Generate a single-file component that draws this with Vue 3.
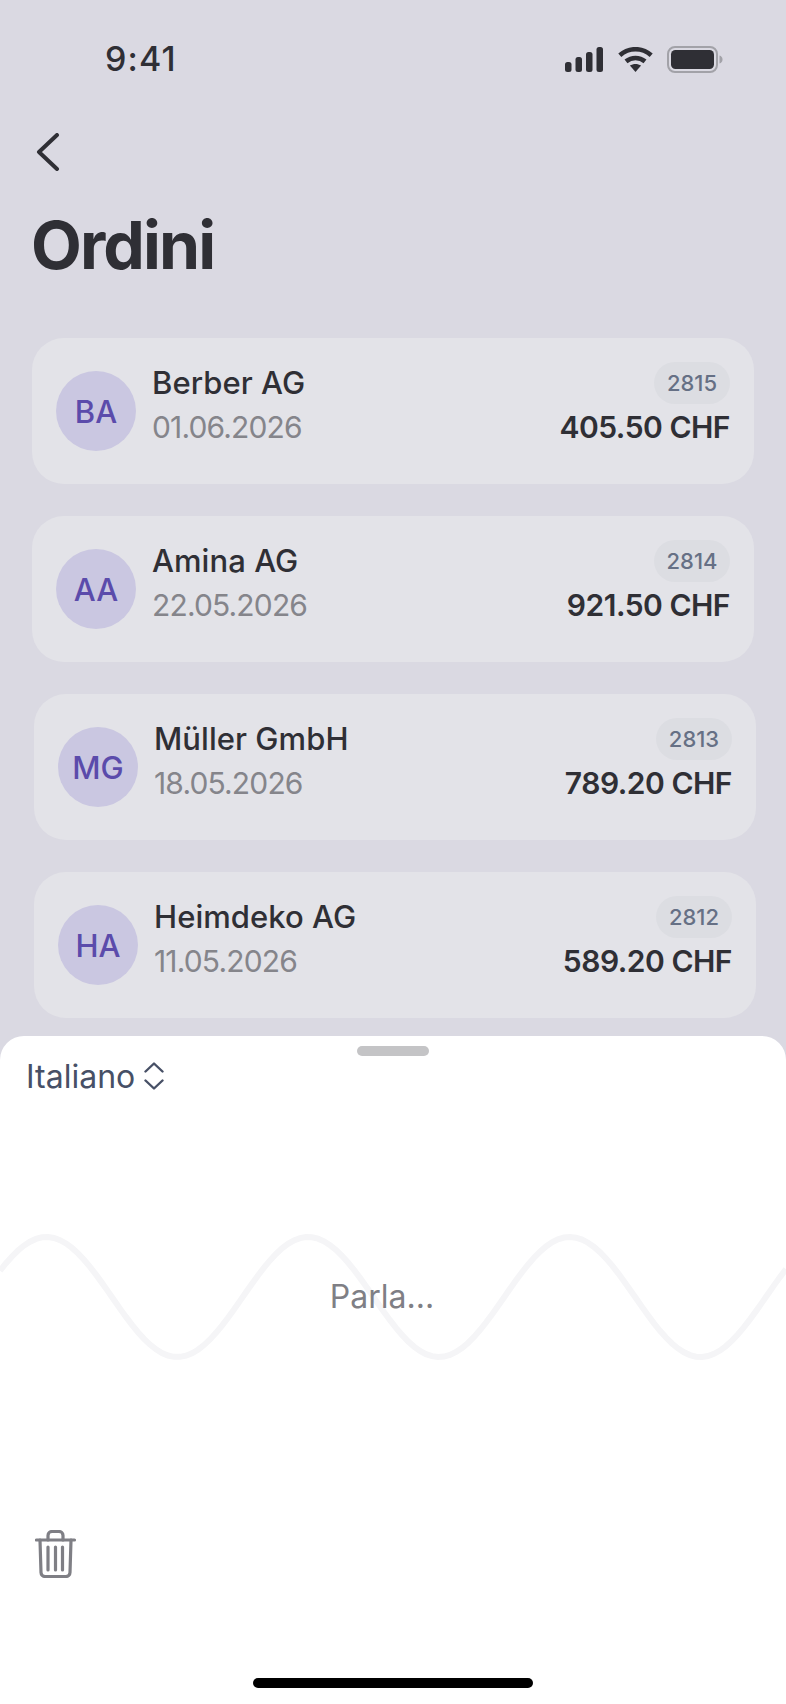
<script setup>
const orders = [
  { initials: 'BA', name: 'Berber AG', date: '01.06.2026', id: '2815', total: '405.50 CHF', shifted: false },
  { initials: 'AA', name: 'Amina AG', date: '22.05.2026', id: '2814', total: '921.50 CHF', shifted: false },
  { initials: 'MG', name: 'Müller GmbH', date: '18.05.2026', id: '2813', total: '789.20 CHF', shifted: true },
  { initials: 'HA', name: 'Heimdeko AG', date: '11.05.2026', id: '2812', total: '589.20 CHF', shifted: true },
]

const points = []
for (let x = 0; x <= 786; x += 6) {
  const y = 68 - 60 * Math.cos((2 * Math.PI * (x - 46.5)) / 261.6)
  points.push(`${x},${y.toFixed(2)}`)
}
const wave = 'M' + points.join(' L')
</script>

<template>
  <div class="screen">
    <header class="status">
      <span class="time">9:41</span>
      <div class="status-icons">
        <svg width="38" height="25" viewBox="0 0 38 25" fill="#2f2f35">
          <rect x="0" y="15" width="6.5" height="10" rx="2.5" />
          <rect x="10.5" y="10" width="6.5" height="15" rx="2.5" />
          <rect x="21" y="5" width="6.5" height="20" rx="2.5" />
          <rect x="31.5" y="0" width="6.5" height="25" rx="2.5" />
        </svg>
        <svg width="35" height="25" viewBox="0 0 35 25" fill="none" stroke="#2f2f35" stroke-width="4.6">
          <path d="M1.8 8.2C11 .2 24 .2 33.2 8.2" />
          <path d="M8 14.4c5.6-4.6 13.4-4.6 19 0" />
          <path d="M17.5 25l-5.6-6.4c3.4-2.2 7.8-2.2 11.2 0z" fill="#2f2f35" stroke="none" />
        </svg>
        <svg class="battery" width="56" height="27" viewBox="0 0 56 27" fill="none">
          <rect x="1" y="1" width="49" height="25" rx="7" stroke="#a2a2a8" stroke-width="2" />
          <rect x="4" y="4" width="43" height="19" rx="4.5" fill="#2f2f35" />
          <path d="M52.500 9.500c1.800.5 3 2 3 4s-1.200 3.500-3 4z" fill="#a2a2a8" />
        </svg>
      </div>
    </header>

    <button class="back" type="button" aria-label="Indietro">
      <svg width="24" height="38" viewBox="0 0 24 38" fill="none" stroke="#2f2f35" stroke-width="4" stroke-linecap="round" stroke-linejoin="round">
        <path d="M21 2 3 19l18 17" />
      </svg>
    </button>

    <h1 class="title">Ordini</h1>

    <ul class="orders">
      <li v-for="o in orders" :key="o.id" class="card" :class="{ shifted: o.shifted }">
        <div class="avatar">{{ o.initials }}</div>
        <div class="info">
          <div class="name">{{ o.name }}</div>
          <div class="date">{{ o.date }}</div>
        </div>
        <div class="meta">
          <span class="badge">{{ o.id }}</span>
          <span class="total">{{ o.total }}</span>
        </div>
      </li>
    </ul>

    <section class="sheet">
      <div class="handle"></div>
      <div class="language">
        <span>Italiano</span>
        <svg width="20" height="28" viewBox="0 0 20 28" fill="none" stroke="#475066" stroke-width="2.4" stroke-linecap="round" stroke-linejoin="round">
          <path d="M1.500 9.500 10 1.500l8.500 8" />
          <path d="M1.500 18.500 10 26.500l8.500-8" />
        </svg>
      </div>

      <div class="voice">
        <svg class="wave" width="786" height="136" viewBox="0 0 786 136" fill="none">
          <path :d="wave" stroke="#f5f5f7" stroke-width="6" />
        </svg>
        <span class="prompt">Parla...</span>
      </div>

      <button class="trash" type="button" aria-label="Elimina">
        <svg width="42" height="48" viewBox="0 0 42 48" fill="none" stroke="#7f7f85" stroke-width="3.2" stroke-linecap="round" stroke-linejoin="round">
          <path d="M1.500 10h38" />
          <path d="M13 10V5.500a4 4 0 0 1 4-4h7a4 4 0 0 1 4 4V10" />
          <path d="M5 10l1 32.500a4 4 0 0 0 4 4h21a4 4 0 0 0 4-4L36 10" />
          <path d="M13 17v23M20.500 17v23M27.500 17v23" />
        </svg>
      </button>

      <div class="home"></div>
    </section>
  </div>
</template>

<style>
html, body { margin: 0; background: #dad9e2; }
</style>

<style scoped>
.screen {
  position: relative;
  width: 786px;
  height: 1704px;
  overflow: hidden;
  background: #dad9e2;
  color: #2f2f35;
  font-family: Inter, "Liberation Sans", sans-serif;
}
.status {
  display: flex;
  align-items: center;
  justify-content: space-between;
  height: 26px;
  padding: 46px 63px 0 105px;
}
.time {
  font-size: 34px;
  line-height: 26px;
  font-weight: 500;
  letter-spacing: 1.1px;
}
.status-icons {
  display: flex;
  align-items: center;
  gap: 15px;
}
.battery { margin-left: -1px; }
.back {
  display: block;
  margin: 61px 0 0 36px;
  padding: 0;
  border: 0;
  background: none;
  height: 38px;
}
.back svg { display: block; }
.title {
  margin: 39px 0 0 31px;
  font-size: 66px;
  line-height: 70px;
  font-weight: 700;
  letter-spacing: -1.9px;
}
.orders {
  list-style: none;
  margin: 58px 0 0;
  padding: 0 32px;
  display: flex;
  flex-direction: column;
  gap: 32px;
}
.card {
  display: flex;
  align-items: center;
  width: 722px;
  height: 146px;
  box-sizing: border-box;
  padding: 0 24px;
  border-radius: 32px;
  background: #e3e3e8;
}
.card.shifted { margin-left: 2px; }
.avatar {
  display: flex;
  align-items: center;
  justify-content: center;
  flex: none;
  width: 80px;
  height: 80px;
  border-radius: 50%;
  background: #cac7e1;
  color: #5b4bab;
  font-size: 31px;
  font-weight: 500;
}
.info {
  flex: 1;
  margin-left: 16px;
  padding-bottom: 13px;
}
.name {
  font-size: 31px;
  line-height: 44px;
  font-weight: 500;
  letter-spacing: 0.05px;
}
.date {
  font-size: 30px;
  line-height: 44px;
  letter-spacing: -0.85px;
  color: #85858b;
}
.meta {
  display: flex;
  flex-direction: column;
  align-items: flex-end;
  gap: 1px;
  padding-bottom: 11px;
}
.badge {
  display: flex;
  align-items: center;
  justify-content: center;
  width: 76px;
  height: 42px;
  border-radius: 21px;
  background: #dcdde2;
  color: #667085;
  font-size: 22px;
  font-weight: 500;
}
.total {
  font-size: 30px;
  line-height: 44px;
  font-weight: 600;
  letter-spacing: -0.5px;
}
.sheet {
  position: absolute;
  left: 0;
  right: 0;
  bottom: 0;
  height: 668px;
  border-radius: 24px 24px 0 0;
  background: #fff;
}
.handle {
  width: 72px;
  height: 10px;
  margin: 10px auto 0;
  border-radius: 5px;
  background: #c4c4c6;
}
.language {
  display: flex;
  align-items: center;
  gap: 9px;
  margin: 0 0 0 26px;
  height: 40px;
  color: #475066;
  font-size: 32px;
}
.voice {
  position: relative;
  display: flex;
  align-items: center;
  justify-content: center;
  height: 136px;
  margin-top: 133px;
  box-sizing: border-box;
  padding: 0 22px 2px 0;
}
.wave {
  position: absolute;
  left: 0;
  top: 0;
}
.prompt {
  position: relative;
  color: #7f7f85;
  font-size: 32px;
}
.trash {
  display: block;
  margin: 165px 0 0 35px;
  padding: 0;
  border: 0;
  background: none;
  height: 48px;
}
.trash svg { display: block; }
.home {
  position: absolute;
  left: 253px;
  bottom: 16px;
  width: 280px;
  height: 10px;
  border-radius: 5px;
  background: #000;
}
</style>
